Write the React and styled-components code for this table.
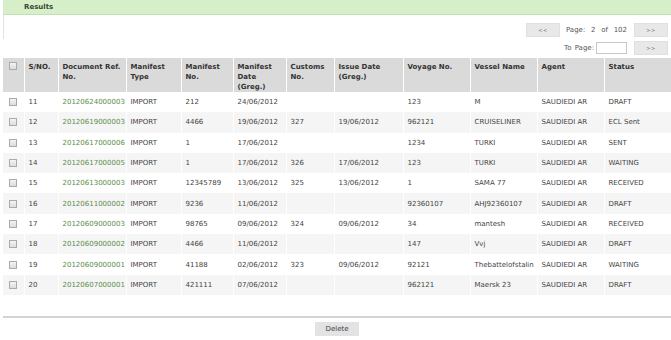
import styled, { createGlobalStyle } from 'styled-components'

const GlobalStyle = createGlobalStyle`
  html, body {
    margin: 0;
    padding: 0;
    background: #fff;
  }
  body {
    font-family: 'DejaVu Sans', Verdana, sans-serif;
    font-size: 7px;
    color: #444;
  }
`

const Page = styled.div`
  width: 668px;
  margin-left: 3px;
  overflow: hidden;
`

const TitleBar = styled.div`
  height: 14px;
  background: #d6efc9;
  border-bottom: 1px solid #c4dfb6;
  padding-left: 21px;
  display: flex;
  align-items: center;
  font-weight: bold;
  font-size: 7px;
  color: #3b4636;
`

const PagerRow = styled.div`
  display: flex;
  justify-content: flex-end;
  align-items: center;
  gap: 6px;
  height: ${p => p.h}px;
  padding: ${p => p.pt || 0}px 3px 0 0;
  border-left: ${p => (p.edge ? '1px solid #e2e2e2' : 'none')};
`

const PagerButton = styled.button`
  width: 34px;
  height: 14px;
  padding: 0;
  margin-left: 1px;
  border: 1px solid #e0e0e0;
  background: #e8e8e8;
  font-family: inherit;
  font-size: 5px;
  color: #777;
  letter-spacing: 0.5px;
`

const PagerText = styled.span`
  font-size: 7px;
  color: #555;
  word-spacing: ${p => (p.wide ? 3.5 : 1)}px;
  margin-right: ${p => (p.tight ? -4 : 0)}px;
`

const PageInput = styled.input`
  width: 29px;
  height: 10px;
  padding: 0;
  border: 1px solid #c8c8c8;
  background: #fff;
`

const Grid = styled.table`
  width: 668px;
  border-collapse: collapse;
  table-layout: fixed;
  margin-top: 2px;
`

const HeadCell = styled.th`
  background: #dadada;
  border-left: 1px solid #fff;
  text-align: left;
  vertical-align: top;
  padding: 4px 4px 0;
  height: 30px;
  line-height: 10px;
  font-weight: bold;
  color: #333;
  &:first-child {
    border-left: none;
    padding-left: 6px;
  }
`

const Row = styled.tr`
  background: ${p => (p.even ? '#f5f5f5' : '#fff')};
`

const Cell = styled.td`
  height: 20.3px;
  padding: 0 4px;
  border-left: 1px solid #fff;
  white-space: nowrap;
  overflow: hidden;
  vertical-align: middle;
  color: ${p => (p.link ? '#5b8d4b' : '#444')};
  &:first-child {
    border-left: none;
    padding-left: 6px;
  }
`

const Box = styled.span`
  display: block;
  width: 8px;
  height: 8px;
  box-sizing: border-box;
  border: 1px solid #aaa;
  background: linear-gradient(#f4f4f4, #dcdcdc);
`

const Footer = styled.div`
  margin-top: 21px;
  border-top: 2px solid #d4d4d4;
  display: flex;
  justify-content: center;
  padding-top: 4px;
`

const DeleteButton = styled.button`
  width: 44px;
  height: 14px;
  padding: 0;
  border: none;
  background: #e3e3e3;
  font-family: inherit;
  font-size: 7px;
  color: #444;
`

const widths = [21, 34, 68, 55, 52, 53, 48, 69, 67, 67, 67, 67]

const headers = [
  'S/NO.',
  'Document Ref. No.',
  'Manifest Type',
  'Manifest No.',
  'Manifest Date (Greg.)',
  'Customs No.',
  'Issue Date (Greg.)',
  'Voyage No.',
  'Vessel Name',
  'Agent',
  'Status',
]

const rows = [
  ['11', '20120624000003', 'IMPORT', '212', '24/06/2012', '', '', '123', 'M', 'SAUDIEDI AR', 'DRAFT'],
  ['12', '20120619000003', 'IMPORT', '4466', '19/06/2012', '327', '19/06/2012', '962121', 'CRUISELINER', 'SAUDIEDI AR', 'ECL Sent'],
  ['13', '20120617000006', 'IMPORT', '1', '17/06/2012', '', '', '1234', 'TURKI', 'SAUDIEDI AR', 'SENT'],
  ['14', '20120617000005', 'IMPORT', '1', '17/06/2012', '326', '17/06/2012', '123', 'TURKI', 'SAUDIEDI AR', 'WAITING'],
  ['15', '20120613000003', 'IMPORT', '12345789', '13/06/2012', '325', '13/06/2012', '1', 'SAMA 77', 'SAUDIEDI AR', 'RECEIVED'],
  ['16', '20120611000002', 'IMPORT', '9236', '11/06/2012', '', '', '92360107', 'AHJ92360107', 'SAUDIEDI AR', 'DRAFT'],
  ['17', '20120609000003', 'IMPORT', '98765', '09/06/2012', '324', '09/06/2012', '34', 'mantesh', 'SAUDIEDI AR', 'RECEIVED'],
  ['18', '20120609000002', 'IMPORT', '4466', '11/06/2012', '', '', '147', 'Vvj', 'SAUDIEDI AR', 'DRAFT'],
  ['19', '20120609000001', 'IMPORT', '41188', '02/06/2012', '323', '09/06/2012', '92121', 'Thebattelofstalin', 'SAUDIEDI AR', 'WAITING'],
  ['20', '20120607000001', 'IMPORT', '421111', '07/06/2012', '', '', '962121', 'Maersk 23', 'SAUDIEDI AR', 'DRAFT'],
]

export default function App() {
  return (
    <Page>
      <GlobalStyle />
      <TitleBar>Results</TitleBar>
      <PagerRow h={18} pt={6} edge>
        <PagerButton>&lt;&lt;</PagerButton>
        <PagerText wide>Page: 2 of 102</PagerText>
        <PagerButton>&gt;&gt;</PagerButton>
      </PagerRow>
      <PagerRow h={17}>
        <PagerText tight>To Page:</PagerText>
        <PageInput />
        <PagerButton>&gt;&gt;</PagerButton>
      </PagerRow>
      <Grid>
        <colgroup>
          {widths.map((w, i) => (
            <col key={i} style={{ width: w }} />
          ))}
        </colgroup>
        <thead>
          <tr>
            <HeadCell>
              <Box />
            </HeadCell>
            {headers.map(h => (
              <HeadCell key={h}>{h}</HeadCell>
            ))}
          </tr>
        </thead>
        <tbody>
          {rows.map((r, i) => (
            <Row key={r[0]} even={i % 2 === 1}>
              <Cell>
                <Box />
              </Cell>
              {r.map((v, j) => (
                <Cell key={j} link={j === 1}>
                  {v}
                </Cell>
              ))}
            </Row>
          ))}
        </tbody>
      </Grid>
      <Footer>
        <DeleteButton>Delete</DeleteButton>
      </Footer>
    </Page>
  )
}
